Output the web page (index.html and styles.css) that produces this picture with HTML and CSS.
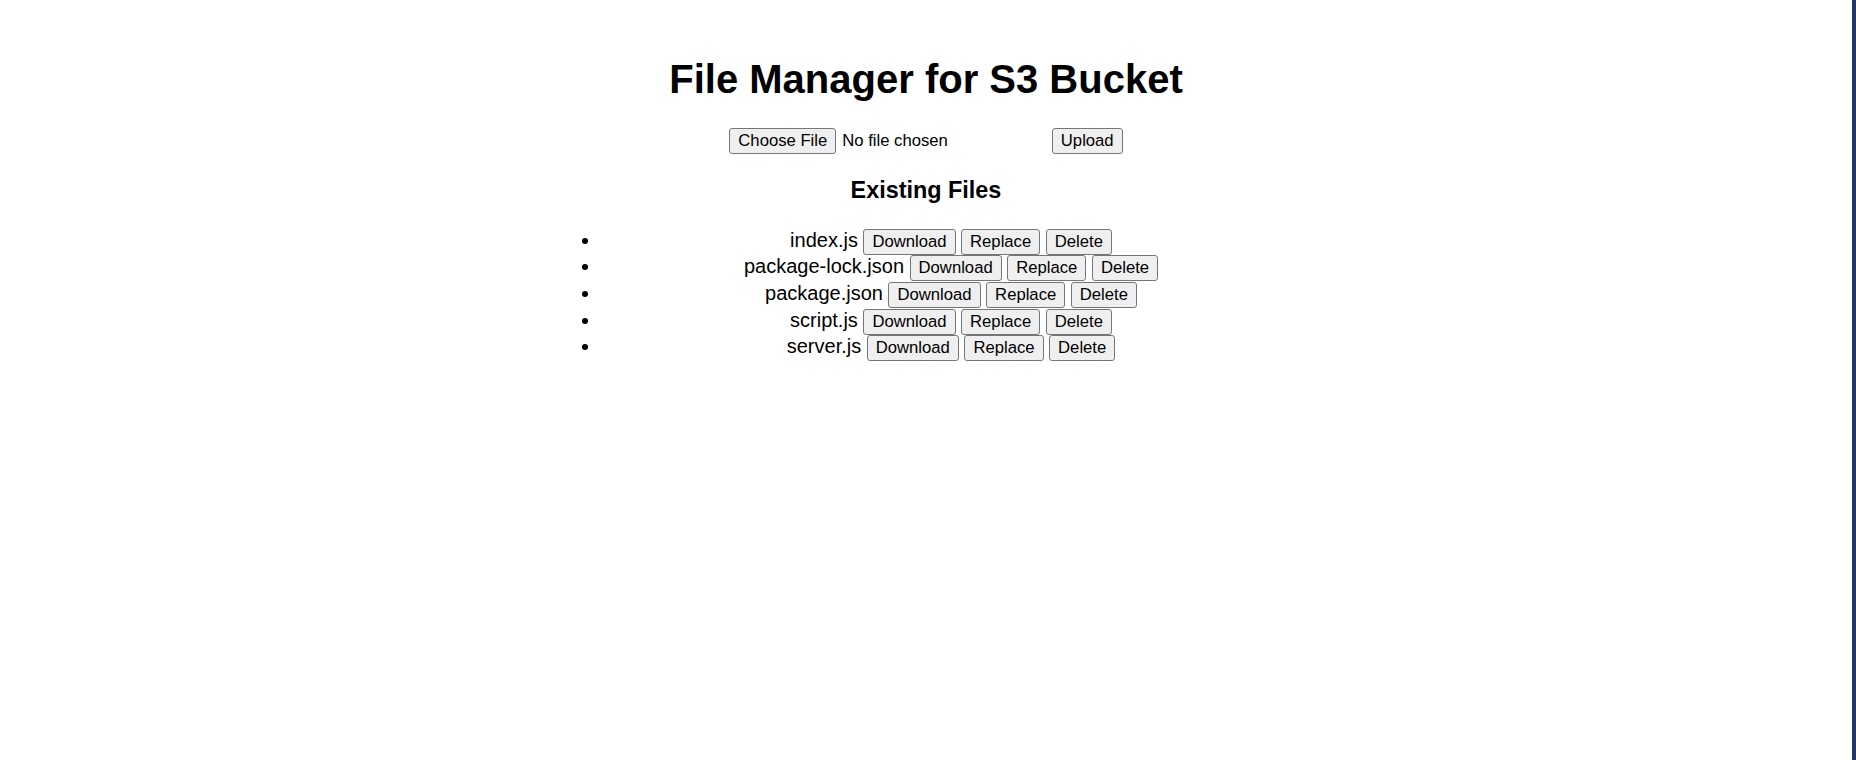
FILE: index.html
```html
<!DOCTYPE html>
<html lang="en">
<head>
<meta charset="utf-8">
<title>File Manager for S3 Bucket</title>
<link rel="stylesheet" href="styles.css">
</head>
<body>
<h1 class="title">File Manager for S3 Bucket</h1>
<form class="upload">
  <span class="file-input"><button type="button" class="btn btn-lg">Choose File</button><span class="file-status">No file chosen</span></span>
  <button type="button" class="btn btn-lg">Upload</button>
</form>
<h3 class="section-title">Existing Files</h3>
<ul class="file-list">
  <li class="file-item"><span class="file-name">index.js</span> <button class="btn">Download</button> <button class="btn">Replace</button> <button class="btn">Delete</button></li>
  <li class="file-item"><span class="file-name">package-lock.json</span> <button class="btn">Download</button> <button class="btn">Replace</button> <button class="btn">Delete</button></li>
  <li class="file-item"><span class="file-name">package.json</span> <button class="btn">Download</button> <button class="btn">Replace</button> <button class="btn">Delete</button></li>
  <li class="file-item"><span class="file-name">script.js</span> <button class="btn">Download</button> <button class="btn">Replace</button> <button class="btn">Delete</button></li>
  <li class="file-item"><span class="file-name">server.js</span> <button class="btn">Download</button> <button class="btn">Replace</button> <button class="btn">Delete</button></li>
</ul>
</body>
</html>
```

FILE: styles.css
```css
html {
  min-height: 100%;
  box-sizing: border-box;
  border-right: 4px solid #1f3a64;
  background: #ffffff;
}

body {
  margin: 0;
  font-family: "Liberation Sans", Arial, sans-serif;
  color: #000000;
  text-align: center;
}

.title {
  font-size: 40px;
  font-weight: bold;
  line-height: 46px;
  margin: 56px 0 0;
}

.upload {
  display: flex;
  justify-content: center;
  align-items: center;
  gap: 5.5px;
  height: 26px;
  margin-top: 26px;
}

.file-input {
  display: flex;
  align-items: center;
  gap: 6px;
  width: 317px;
}

.file-status {
  font-size: 16.67px;
}

.btn {
  font-family: "Liberation Sans", Arial, sans-serif;
  font-size: 16.67px;
  color: #000000;
  background: #efefef;
  border: 1px solid #767676;
  border-radius: 3px;
  padding: 2px 8px;
  margin: 0;
  line-height: normal;
}

.btn-lg {
  padding-top: 2.4px;
  padding-bottom: 2.4px;
}

.section-title {
  font-size: 23.4px;
  font-weight: bold;
  margin: 23.4px 0;
}

.file-list {
  width: 750px;
  margin: 0 auto;
  padding: 0 0 0 50px;
  box-sizing: border-box;
  list-style: disc outside;
}

.file-item {
  font-size: 20px;
  height: 26.6px;
  line-height: 24.4px;
}
```
